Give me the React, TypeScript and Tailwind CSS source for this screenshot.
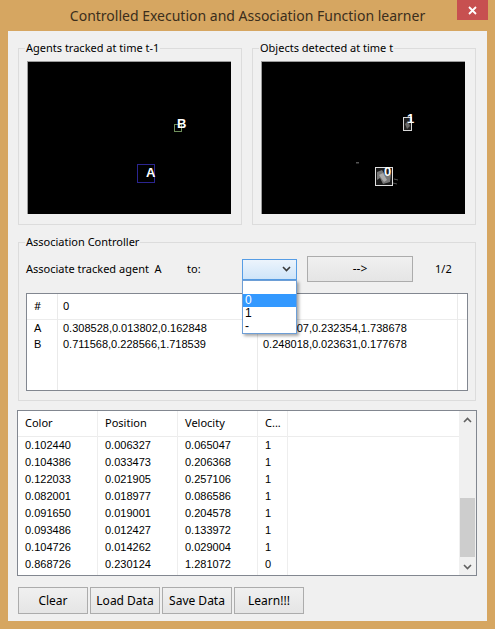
import React from 'react';

const UI = { fontFamily: '"Noto Sans", "Open Sans", sans-serif' };
const DATA = { fontFamily: '"Liberation Sans", Arial, sans-serif' };

const TRAINING_ROWS = [
  ['0.102440', '0.006327', '0.065047', '1'],
  ['0.104386', '0.033473', '0.206368', '1'],
  ['0.122033', '0.021905', '0.257106', '1'],
  ['0.082001', '0.018977', '0.086586', '1'],
  ['0.091650', '0.019001', '0.204578', '1'],
  ['0.093486', '0.012427', '0.133972', '1'],
  ['0.104726', '0.014262', '0.029004', '1'],
  ['0.868726', '0.230124', '1.281072', '0'],
];

const AGENT_ROWS = [
  { id: 'A', c0: '0.308528,0.013802,0.162848', c1: '0.473207,0.232354,1.738678' },
  { id: 'B', c0: '0.711568,0.228566,1.718539', c1: '0.248018,0.023631,0.177678' },
];

const Chevron = ({ up = false, className = '' }) => (
  <svg width="9" height="6" viewBox="0 0 9 6" className={className}>
    <polyline
      points={up ? '1,5 4.5,1.5 8,5' : '1,1 4.5,4.5 8,1'}
      fill="none"
      stroke="currentColor"
      strokeWidth="1.6"
    />
  </svg>
);

// frame drawn by the tracker (previous time step)
const TrackedView = () => (
  <svg width="203" height="152" viewBox="0 0 203 152">
    <rect x="109.5" y="102.5" width="17" height="18" fill="none" stroke="#2b2590" />
    <rect x="146.5" y="62.5" width="7" height="7" fill="none" stroke="#6f905c" />
    <text x="118" y="115" fill="#fff" fontSize="13" fontWeight="bold" style={DATA}>A</text>
    <text x="149" y="66" fill="#fff" fontSize="13" fontWeight="bold" style={DATA}>B</text>
  </svg>
);

// blobs found by the detector (current time step)
const DetectedView = () => (
  <svg width="203" height="152" viewBox="0 0 203 152">
    <rect x="141.5" y="55.5" width="8" height="13" fill="#222" stroke="#d8d8d8" />
    <path d="M143 62 L146 59 L148 64 L145 67 Z" fill="#6a6a6a" />
    <rect x="113.5" y="105.5" width="17" height="18" fill="#1a1a1a" stroke="#e0e0e0" />
    <path d="M115 110 L120 108 L124 114 L129 112 L128 120 L121 122 L118 116 L115 118 Z" fill="#777" />
    <path d="M117 113 L121 111 L125 118 L122 120 Z" fill="#aaa" />
    <path d="M132 117 L136 118 M131 121 L135 122" stroke="#555" strokeWidth="1" />
    <rect x="94" y="100" width="3" height="1.5" fill="#555" />
    <text x="145" y="61" fill="#fff" fontSize="13" fontWeight="bold" style={DATA}>1</text>
    <text x="122" y="114" fill="#fff" fontSize="13" fontWeight="bold" style={DATA}>0</text>
  </svg>
);

const ImageGroup = ({ title, children }) => (
  <fieldset className="w-[224px] border border-[#dcdcdc] pl-[8px] pb-[10px]">
    <legend className="ml-[-2px] px-[1px] h-[16px] leading-[16px] text-[11px] text-black" style={UI}>
      {title}
    </legend>
    <div className="mt-[5px] w-[204px] h-[153px] bg-black border-t border-l border-[#9c9c9c]">
      {children}
    </div>
  </fieldset>
);

const WinButton = ({ label, className = '' }) => (
  <button
    className={`border border-[#acacac] bg-gradient-to-b from-[#f0f0f0] to-[#e5e5e5] text-[12px] text-black flex items-center justify-center ${className}`}
    style={UI}
  >
    {label}
  </button>
);

const AgentCombo = () => (
  <div className="relative w-[55px] h-[21px]">
    <div className="w-full h-full border border-[#569de5] bg-gradient-to-b from-[#ecf4fc] to-[#cfe5f9] flex items-center justify-end pr-[5px]">
      <Chevron className="text-[#3a3a3a]" />
    </div>
    {/* open popup list */}
    <div
      className="absolute left-0 top-[21px] w-[55px] bg-white border border-[#6d9ed6] shadow-[2px_2px_3px_rgba(0,0,0,0.35)] z-10 text-[12px]"
      style={DATA}
    >
      <div className="h-[13px]" />
      <div className="h-[13px] leading-[13px] pl-[2px] bg-[#3399ff] text-white">0</div>
      <div className="h-[13px] leading-[13px] pl-[2px]">1</div>
      <div className="h-[13px] leading-[13px] pl-[2px]">-</div>
    </div>
  </div>
);

const AgentTable = () => {
  const cols = [
    { head: '#', w: 'w-[31px]', pad: 'pl-[7px]', cells: AGENT_ROWS.map(r => r.id) },
    { head: '0', w: 'w-[200px]', pad: 'pl-[5px]', cells: AGENT_ROWS.map(r => r.c0) },
    { head: '', w: 'w-[200px]', pad: 'pl-[5px]', cells: AGENT_ROWS.map(r => r.c1) },
  ];
  return (
    <div className="mt-[11px] w-[442px] h-[98px] border border-[#828790] bg-white flex text-[11px] text-black">
      {cols.map((c, i) => (
        <div key={i} className={`${c.w} border-r border-[#eaeaea] flex flex-col`}>
          <div className={`h-[26px] border-b border-[#ececec] ${c.pad} flex items-center`} style={UI}>
            {c.head}
          </div>
          {c.cells.map((v, j) => (
            <div key={j} className={`h-[16px] leading-[16px] ${c.pad}`} style={DATA}>
              {v}
            </div>
          ))}
        </div>
      ))}
      <div className="flex-1 flex flex-col">
        <div className="h-[26px] border-b border-[#ececec]" />
      </div>
    </div>
  );
};

const TrainingTable = () => {
  const heads = [
    { label: 'Color', w: 'w-[80px]' },
    { label: 'Position', w: 'w-[80px]' },
    { label: 'Velocity', w: 'w-[80px]' },
    { label: 'C...', w: 'w-[30px]' },
  ];
  return (
    <div className="mt-[9px] ml-[9px] w-[460px] h-[166px] border border-[#828790] bg-white flex text-[11px] text-black">
      <div className="flex-1 flex">
        {heads.map((h, i) => (
          <div key={h.label} className={`${h.w} border-r border-[#eeeeee] flex flex-col`}>
            <div className="h-[26px] border-b border-[#ececec] pl-[7px] flex items-center" style={UI}>
              {h.label}
            </div>
            {TRAINING_ROWS.map((r, j) => (
              <div key={j} className="h-[17px] leading-[17px] pl-[7px]" style={DATA}>
                {r[i]}
              </div>
            ))}
          </div>
        ))}
        <div className="flex-1 flex flex-col">
          <div className="h-[26px] border-b border-[#ececec]" />
        </div>
      </div>
      {/* vertical scrollbar, scrolled to the end */}
      <div className="w-[17px] bg-[#f0f0f0] flex flex-col text-[#606060]">
        <div className="h-[17px] flex items-center justify-center">
          <Chevron up />
        </div>
        <div className="flex-1 flex flex-col justify-end px-[1px] pb-[1px]">
          <div className="h-[59px] bg-[#cdcdcd]" />
        </div>
        <div className="h-[17px] flex items-center justify-center">
          <Chevron />
        </div>
      </div>
    </div>
  );
};

export default function App() {
  return (
    <div className="w-[495px] h-[629px] bg-[#d6a661] flex flex-col overflow-hidden">
      {/* title bar */}
      <div className="relative h-[31px] flex items-center justify-center">
        <span className="text-[14px] text-[#3b2e1c] pb-[1px]" style={UI}>
          Controlled Execution and Association Function learner
        </span>
        <button className="absolute right-[7px] top-0 w-[31px] h-[20px] bg-[#c75050] flex items-center justify-center">
          <svg width="9" height="9" viewBox="0 0 9 9">
            <path d="M1 1 L8 8 M8 1 L1 8" stroke="#fff" strokeWidth="1.8" />
          </svg>
        </button>
      </div>

      {/* client area */}
      <div className="mx-[8px] h-[590px] bg-[#f0f0f0] flex flex-col">
        <div className="pt-[9px] pl-[10px] flex gap-[10px]">
          <ImageGroup title="Agents tracked at time t-1">
            <TrackedView />
          </ImageGroup>
          <ImageGroup title="Objects detected at time t">
            <DetectedView />
          </ImageGroup>
        </div>

        <fieldset className="mt-[9px] ml-[10px] w-[458px] border border-[#dcdcdc] pl-[7px] pb-[9px]">
          <legend className="ml-[-1px] px-[1px] h-[16px] leading-[16px] text-[11px] text-black" style={UI}>
            Association Controller
          </legend>
          <div className="mt-[6px] h-[26px] flex items-center text-[11px] text-black" style={UI}>
            <span className="w-[161px]">Associate tracked agent&nbsp;&nbsp;A</span>
            <span className="w-[55px]">to:</span>
            <AgentCombo />
            <WinButton label="-->" className="ml-[10px] w-[106px] h-[26px]" />
            <span className="ml-[22px]">1/2</span>
          </div>
          <AgentTable />
        </fieldset>

        <TrainingTable />

        <div className="mt-[11px] ml-[10px] flex gap-[2px]">
          <WinButton label="Clear" className="w-[70px] h-[27px]" />
          <WinButton label="Load Data" className="w-[70px] h-[27px]" />
          <WinButton label="Save Data" className="w-[70px] h-[27px]" />
          <WinButton label="Learn!!!" className="w-[70px] h-[27px]" />
        </div>
      </div>
    </div>
  );
}
